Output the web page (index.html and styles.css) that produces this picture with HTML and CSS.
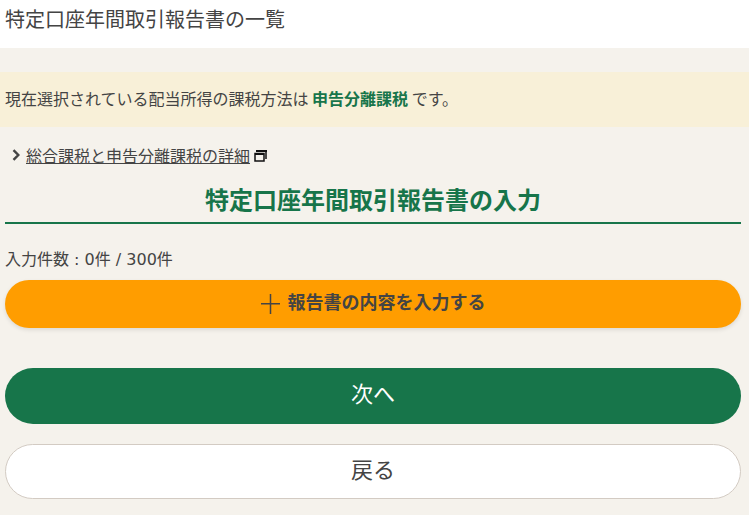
FILE: index.html
```html
<!DOCTYPE html>
<html lang="ja">
<head>
  <meta charset="UTF-8" />
  <title>特定口座年間取引報告書の一覧</title>
  <link rel="stylesheet" href="styles.css">
</head>
<body>
  <header class="page-header">特定口座年間取引報告書の一覧</header>
  <div class="notice">現在選択されている配当所得の課税方法は <strong>申告分離課税</strong> です。</div>
  <main class="content">
    <div class="detail-link">
      <svg class="chevron" width="9" height="12" viewBox="0 0 9 12"><path d="M1.500 1.200 6.300 6 1.500 10.800" fill="none" stroke="#444" stroke-width="2.400"/></svg>
      <a href="#">総合課税と申告分離課税の詳細</a>
      <svg class="window-icon" width="13" height="12" viewBox="0 0 13 12"><path d="M2.500 1h9.500v8" fill="none" stroke="#111" stroke-width="1.500"/><path d="M1 3.500h9v7.500H1z" fill="none" stroke="#111" stroke-width="1.500"/><path d="M2 0h11v2H2zM1 3h9v2H1z" fill="#111"/></svg>
    </div>
    <h2 class="section-title">特定口座年間取引報告書の入力</h2>
    <p class="count">入力件数 : 0件 / 300件</p>
    <button class="btn-add" type="button">
      <svg width="19" height="20" viewBox="0 0 19 20"><path d="M0 9.750h19M9.500 0v20" stroke="#444" stroke-width="1.500"/></svg>
      <span class="btn-label">報告書の内容を入力する</span>
    </button>
    <button class="btn-next" type="button"><span class="btn-label">次へ</span></button>
    <button class="btn-back" type="button"><span class="btn-label">戻る</span></button>
  </main>
</body>
</html>
```

FILE: styles.css
```css
body {
  margin: 0;
  font-family: "Noto Sans CJK JP", "Liberation Sans", sans-serif;
  background: #f5f2ec;
  color: #444;
}

.page-header {
  background: #fff;
  height: 48px;
  box-sizing: border-box;
  padding: 6px 5px 0;
  font-size: 20px;
  line-height: 26px;
}

.notice {
  margin-top: 24px;
  height: 55px;
  padding: 0 5px;
  background: #f8f0d8;
  font-size: 16px;
  line-height: 53px;
}

.notice strong {
  color: #17754a;
}

.content {
  padding: 0 8px 0 5px;
}

.detail-link {
  display: flex;
  align-items: center;
  height: 22px;
  margin-top: 17px;
  font-size: 16px;
}

.chevron {
  margin: 0 5px 0 7px;
}

.detail-link a {
  color: #444;
}

.window-icon {
  margin: 1px 0 0 4px;
}

.section-title {
  margin: 13px 0 0;
  height: 45px;
  border-bottom: 2px solid #17754a;
  box-sizing: border-box;
  text-align: center;
  color: #17754a;
  font-size: 24px;
  line-height: 40px;
}

.count {
  margin: 25px 0 0;
  font-family: "DejaVu Sans", "Noto Sans CJK JP", sans-serif;
  font-size: 16px;
  line-height: 22px;
}

button {
  display: flex;
  justify-content: center;
  align-items: center;
  width: 100%;
  box-sizing: border-box;
  border-radius: 28px;
  font-family: inherit;
  cursor: pointer;
}

.btn-label {
  margin-bottom: 8px;
}

.btn-add {
  gap: 8px;
  height: 48px;
  margin-top: 9px;
  border: none;
  background: #ff9d00;
  color: #444;
  font-size: 18px;
  font-weight: 700;
  box-shadow: 0 2px 4px rgba(0, 0, 0, 0.1);
}

.btn-add .btn-label {
  margin-bottom: 6px;
}

.btn-next {
  height: 56px;
  margin-top: 40px;
  border: none;
  background: #17754a;
  color: #fff;
  font-size: 22px;
}

.btn-back {
  height: 55px;
  margin-top: 20px;
  border: 1px solid #d3cbc3;
  background: #fff;
  color: #444;
  font-size: 22px;
}
```
